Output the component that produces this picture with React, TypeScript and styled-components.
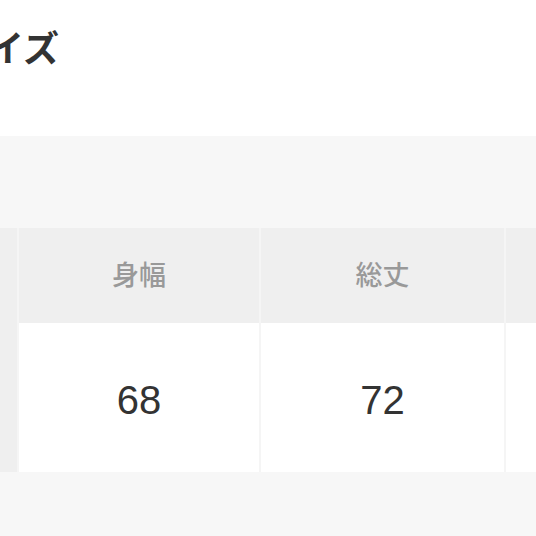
import styled, { createGlobalStyle } from "styled-components";

const GlobalStyle = createGlobalStyle`
  html, body {
    margin: 0;
    padding: 0;
    background: #f5f5f5;
  }
  body {
    font-family: "Noto Sans CJK JP", "Noto Sans", sans-serif;
  }
`;

const Page = styled.div`
  width: 536px;
  height: 536px;
  overflow: hidden;
  display: flex;
  flex-direction: column;
  background: #f5f5f5;
`;

const Header = styled.header`
  height: 136px;
  flex: 0 0 136px;
  background: #fff;
  padding-top: 28px;
  box-sizing: border-box;
  overflow: hidden;
`;

const Title = styled.h2`
  margin: 0 0 0 -48px;
  font-size: 36px;
  line-height: 36px;
  font-weight: 700;
  color: #333;
  white-space: nowrap;
`;

const Section = styled.section`
  flex: 1 1 auto;
  background: #f7f7f7;
  padding-top: 92px;
  overflow: hidden;
`;

const Table = styled.div`
  display: grid;
  grid-template-columns: 17px 240px 243px 240px;
  grid-template-rows: 95px 149px;
  column-gap: 2px;
  background: #f5f5f5;
  width: max-content;
`;

const Cell = styled.div<{ $head?: boolean; $side?: boolean }>`
  display: flex;
  align-items: center;
  justify-content: center;
  box-sizing: border-box;
  padding: ${(p) => (p.$head ? "0 0 4px" : "5px 0 0")};
  background: ${(p) => (p.$head || p.$side ? "#efefef" : "#fff")};
  color: ${(p) => (p.$head ? "#999" : "#333")};
  font-family: ${(p) =>
    p.$head
      ? `"Noto Sans CJK JP", sans-serif`
      : `"Liberation Sans", Arial, sans-serif`};
  font-size: ${(p) => (p.$head ? "27px" : "40px")};
  font-weight: ${(p) => (p.$head ? 500 : 400)};
`;

// third column runs off the right edge; its text is outside the view
const heads = ["身幅", "総丈", ""];
const values = ["68", "72", ""];

export default function App() {
  return (
    <Page>
      <GlobalStyle />
      <Header>
        <Title>サイズ</Title>
      </Header>
      <Section>
        <Table>
          <Cell $side />
          {heads.map((h, i) => (
            <Cell key={i} $head>
              {h}
            </Cell>
          ))}
          <Cell $side />
          {values.map((v, i) => (
            <Cell key={i}>{v}</Cell>
          ))}
        </Table>
      </Section>
    </Page>
  );
}
